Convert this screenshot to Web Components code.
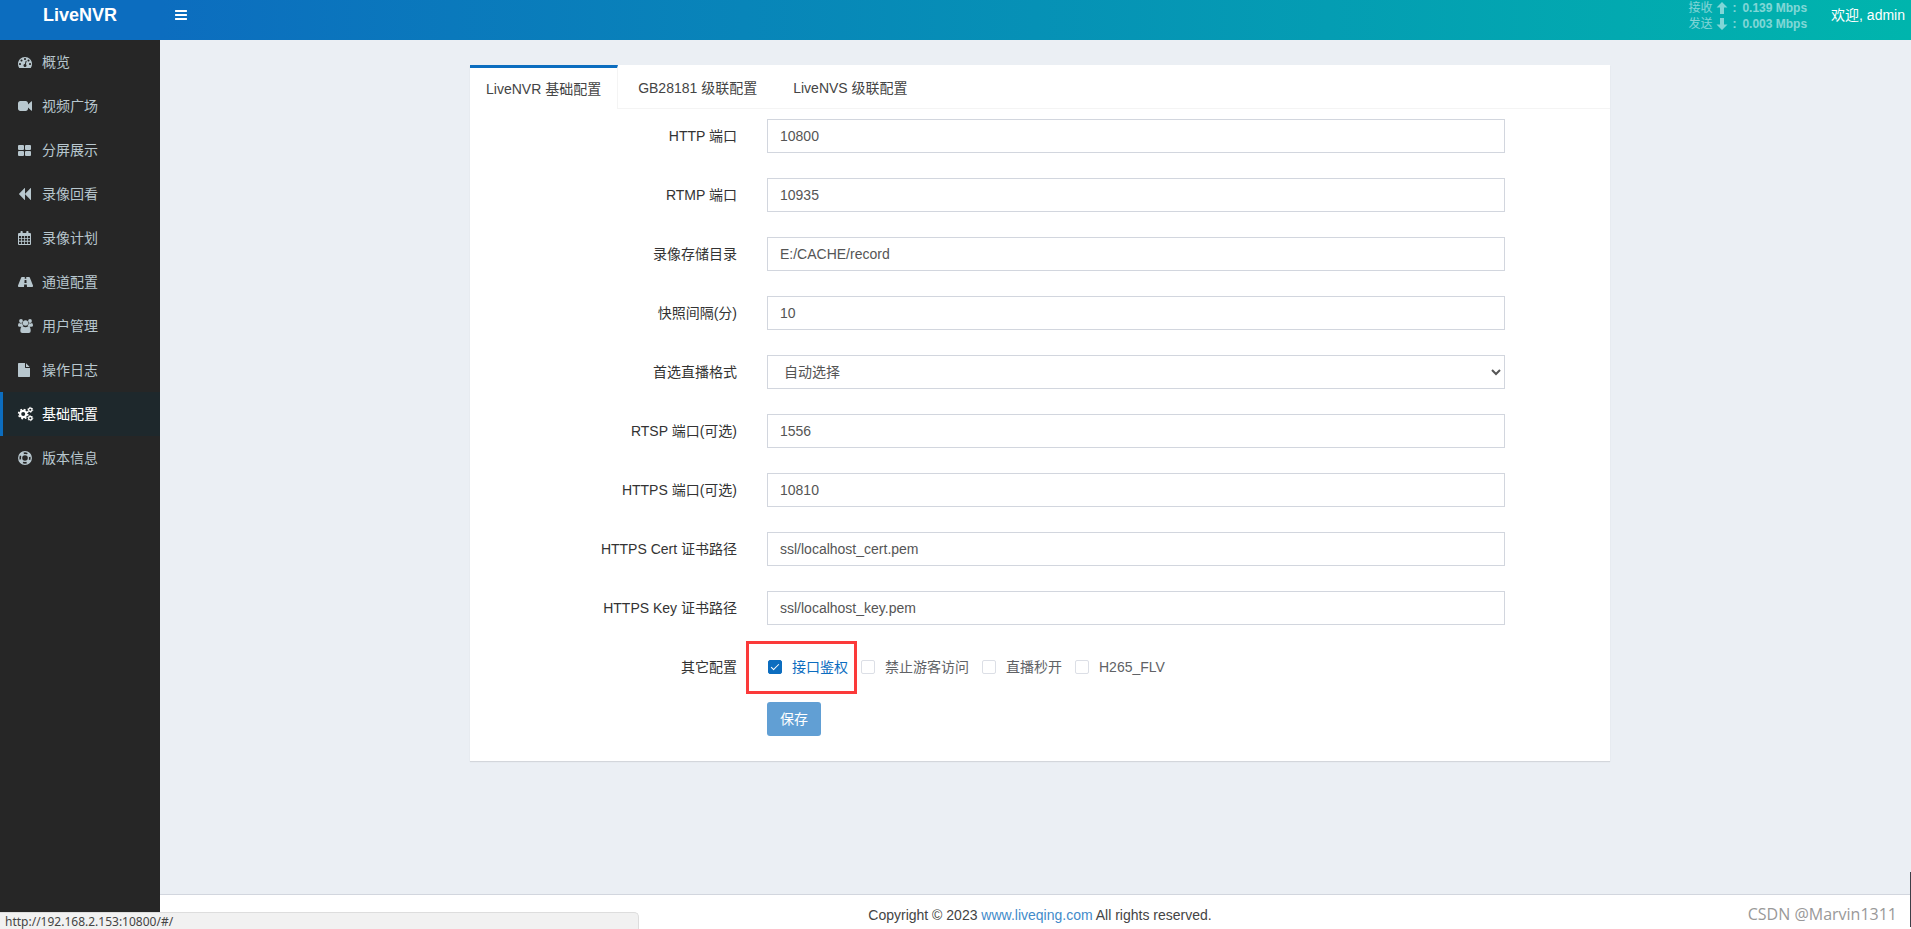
<!DOCTYPE html>
<html lang="zh-CN">
<head>
<meta charset="utf-8">
<title>LiveNVR</title>
<style>
html, body { margin: 0; height: 100%; }
body {
  font: 14px/20px "Liberation Sans", "Noto Sans CJK SC", sans-serif;
  color: #333;
  overflow: hidden;
  --primary: #0c6dbf;
  --line: #d2d6de;
}
</style>
</head>
<body>
<nvr-app></nvr-app>
<script>
const ICONS = {
  bars: ['0 0 1792 1792', '<path d="M1664 1344v128q0 26-19 45t-45 19h-1408q-26 0-45-19t-19-45v-128q0-26 19-45t45-19h1408q26 0 45 19t19 45zm0-512v128q0 26-19 45t-45 19h-1408q-26 0-45-19t-19-45v-128q0-26 19-45t45-19h1408q26 0 45 19t19 45zm0-512v128q0 26-19 45t-45 19h-1408q-26 0-45-19t-19-45v-128q0-26 19-45t45-19h1408q26 0 45 19t19 45z"/>'],
  dashboard: ['0 0 1792 1792', '<path d="M384 1152q0-53-37.5-90.5t-90.5-37.5-90.5 37.5-37.5 90.5 37.5 90.5 90.5 37.5 90.5-37.5 37.5-90.5zm192-448q0-53-37.5-90.5t-90.5-37.5-90.5 37.5-37.5 90.5 37.5 90.5 90.5 37.5 90.5-37.5 37.5-90.5zm428 481l101-382q6-26-7.5-48.5t-38.5-29.5-48 6.5-30 39.5l-101 382q-60 5-107 43.5t-63 98.5q-20 77 20 146t117 89 146-20 89-117q16-60-6-117t-72-91zm660-33q0-53-37.5-90.5t-90.5-37.5-90.5 37.5-37.5 90.5 37.5 90.5 90.5 37.5 90.5-37.5 37.5-90.5zm-640-640q0-53-37.5-90.5t-90.5-37.5-90.5 37.5-37.5 90.5 37.5 90.5 90.5 37.5 90.5-37.5 37.5-90.5zm448 192q0-53-37.5-90.5t-90.5-37.5-90.5 37.5-37.5 90.5 37.5 90.5 90.5 37.5 90.5-37.5 37.5-90.5zm320 448q0 261-141 483-19 29-54 29h-1402q-35 0-54-29-141-221-141-483 0-182 71-348t191-286 286-191 348-71 348 71 286 191 191 286 71 348z"/>'],
  video: ['0 0 1792 1792', '<path d="M1792 352v1088q0 42-39 59-13 5-25 5-27 0-45-19l-403-403v166q0 119-84.5 203.5t-203.5 84.5h-704q-119 0-203.5-84.5t-84.5-203.5v-704q0-119 84.5-203.5t203.5-84.5h704q119 0 203.5 84.5t84.5 203.5v165l403-402q18-19 45-19 12 0 25 5 39 17 39 59z"/>'],
  grid: ['64 0 1792 1792', '<rect x="64" y="256" width="768" height="640" rx="128"/><rect x="960" y="256" width="768" height="640" rx="128"/><rect x="64" y="1024" width="768" height="640" rx="128"/><rect x="960" y="1024" width="768" height="640" rx="128"/>'],
  backward: ['0 0 1792 1792', '<path d="M1619 141q19-19 32-13t13 32v1472q0 26-13 32t-32-13l-710-710q-9-9-13-19v710q0 26-13 32t-32-13l-710-710q-19-19-19-45t19-45l710-710q19-19 32-13t13 32v710q4-10 13-19z"/>'],
  calendar: ['0 0 14 14', '<path fill-rule="evenodd" d="M1 2h1.500V.8q0-.8.8-.8h.6q.8 0 .8.800V2h3.600V.8q0-.8.8-.8h.6q.8 0 .8.800V2H12q1 0 1 1v10q0 1-1 1H1q-1 0-1-1V3q0-1 1-1zM1 5v2h2.200V5zm3 0v2h2.200V5zm3 0v2h2V5zm2.800 0v2H12V5zM1 7.800v2h2.200v-2zm3 0v2h2.200v-2zm3 0v2h2v-2zm2.800 0v2H12v-2zM1 10.700V13h2.200v-2.300zm3 0V13h2.200v-2.300zm3 0V13h2v-2.300zm2.800 0V13H12v-2.300z"/>'],
  road: ['0 0 14 14', '<path fill-rule="evenodd" d="M3.800 2h3l-.1 1.800h1.600L8.200 2h3q.4 0 .6.500L15 10.600q.2 1.400-.6 1.400H9l-.2-2.500H6.200L6 12H.6q-.8 0-.6-1.400L3.200 2.500q.2-.5.6-.5zM6.600 5l-.2 3h2.200l-.2-3z"/>'],
  users: ['0 0 14 14', '<circle cx="3" cy="2" r="1.900"/><circle cx="12" cy="2" r="1.900"/><circle cx="7.500" cy="4" r="2.700"/><path d="M1.100 4Q3 5 4.300 4.100 4.400 6 5.500 6.900 4 7 3.400 7.800H1.600Q0 7.800 0 6.500 0 4.200 1.100 4zM13.900 4Q12 5 10.700 4.100 10.600 6 9.500 6.900 11 7 11.600 7.800h1.800q1.600 0 1.600-1.300Q15 4.200 13.900 4zM4.800 7.300q2.700 1.700 5.400 0 2.500.2 2.500 4.700 0 2-2 2H4.300q-2 0-2-2 0-4.500 2.500-4.700z"/>'],
  file: ['128 0 1792 1792', '<path d="M1152 512v-472q22 14 36 28l408 408q14 14 28 36h-472zm-128 32q0 40 28 68t68 28h544v1056q0 40-28 68t-68 28h-1344q-40 0-68-28t-28-68v-1600q0-40 28-68t68-28h800v544z"/>'],
  cogs: ['0 0 14 14', '<g fill="none" stroke="currentColor"><circle cx="5.200" cy="7" r="3.100" stroke-width="2.200"/><circle cx="5.200" cy="7" r="4.600" stroke-width="1.600" stroke-dasharray="1.810 1.803"/><circle cx="12.300" cy="2.800" r="1.700" stroke-width="1.300"/><circle cx="12.300" cy="2.800" r="2.500" stroke-width=".9" stroke-dasharray="1.310 1.308"/><circle cx="12.300" cy="11.200" r="1.700" stroke-width="1.300"/><circle cx="12.300" cy="11.200" r="2.500" stroke-width=".9" stroke-dasharray="1.310 1.308"/></g>'],
  ring: ['0 0 14 14', '<g fill="none" stroke="currentColor"><circle cx="7" cy="7" r="6.300" stroke-width="1.300"/><circle cx="7" cy="7" r="3.400" stroke-width="1.200"/><circle cx="7" cy="7" r="5" stroke-width="3" stroke-dasharray="3.930 3.924" stroke-dashoffset="-1.960"/></g>'],
  up: ['0 0 12 12', '<path d="M6 0l5.500 5.500H8V12H4V5.500H.5z"/>'],
  down: ['0 0 12 12', '<path d="M6 12l5.500-5.500H8V0H4v6.500H.5z"/>']
};

/* Base element: renders its template into an open shadow root. */
class Base extends HTMLElement {
  connectedCallback() {
    if (this.shadowRoot) return;
    const t = document.createElement('template');
    t.innerHTML = '<style>*{box-sizing:border-box}</style>' + this.render();
    this.attachShadow({ mode: 'open' }).append(t.content.cloneNode(true));
  }
  attr(name) { return this.getAttribute(name) || ''; }
}

customElements.define('nvr-icon', class extends Base {
  render() {
    const [box, body] = ICONS[this.attr('name')];
    return `<style>:host{display:inline-block;width:14px;height:14px;flex:none}svg{display:block;width:100%;height:100%;overflow:visible}</style>
      <svg viewBox="${box}" fill="currentColor" aria-hidden="true">${body}</svg>`;
  }
});

customElements.define('nvr-header', class extends Base {
  render() {
    return `<style>
      :host{display:flex;height:40px;color:#fff;background:linear-gradient(to right,var(--primary) 160px,#00b5ad)}
      .logo{width:160px;line-height:30px;text-align:center;font-size:18px;font-weight:bold;color:#fff;text-decoration:none}
      button{align-self:flex-start;height:30px;margin:0;padding:0 14px;border:0;background:none;color:inherit;display:flex;align-items:center}
      .rates{margin-left:auto;opacity:.5;font-size:12px;line-height:15px;font-weight:bold}
      .rates div{display:grid;grid-template-columns:24px 12px 6px auto;gap:4px;align-items:center;height:16px}
      .rates nvr-icon{width:12px;height:12px}
      .cjk{font-weight:normal}
      .user{line-height:30px;padding:0 6px 0 24px;color:#fff;text-decoration:none}
    </style>
    <a class="logo" href="#/">LiveNVR</a>
    <button type="button" aria-label="菜单"><nvr-icon name="bars"></nvr-icon></button>
    <div class="rates">
      <div><span class="cjk">接收</span><nvr-icon name="up"></nvr-icon><span>:</span><span>0.139 Mbps</span></div>
      <div><span class="cjk">发送</span><nvr-icon name="down"></nvr-icon><span>:</span><span>0.003 Mbps</span></div>
    </div>
    <a class="user" href="#/user">欢迎, admin</a>`;
  }
});

customElements.define('nvr-nav-item', class extends Base {
  render() {
    return `<style>
      :host{display:block}
      a{display:flex;align-items:center;gap:10px;height:44px;padding-left:15px;border-left:3px solid transparent;color:#b8c7ce;text-decoration:none}
      :host([active]) a{background:#1e282c;border-color:var(--primary);color:#fff}
    </style><a href="#/"><nvr-icon name="${this.attr('icon')}"></nvr-icon><slot></slot></a>`;
  }
});

customElements.define('nvr-tab', class extends Base {
  render() {
    return `<style>
      :host{display:block}
      button{font:inherit;color:#444;background:none;margin:0 5px 0 0;height:43px;padding:3px 15px 0;border:0;border-right:1px solid transparent;display:block}
      :host([active]) button{position:relative;height:44px;padding:0 16px;margin-bottom:-1px;background:#fff;border-top:3px solid var(--primary);border-right-color:#f4f4f4}
    </style><button type="button" role="tab"><slot></slot></button>`;
  }
});

customElements.define('nvr-field', class extends Base {
  render() {
    const control = this.hasAttribute('select')
      ? `<select id="c"><option>${this.attr('value')}</option></select>`
      : `<input id="c" type="text" value="${this.attr('value')}">`;
    return `<style>
      :host{display:grid;grid-template-columns:3fr 8fr 1fr}
      label{padding:7px 15px;text-align:right}
      .control{padding:0 15px}
      input,select{display:block;width:100%;height:34px;margin:0;padding:6px 12px;border:1px solid var(--line);border-radius:0;background:#fff;font:inherit;color:#555}
    </style><label for="c">${this.attr('label')}</label><div class="control">${control}</div>`;
  }
});

customElements.define('nvr-check', class extends Base {
  render() {
    return `<style>
      :host{display:block}
      label{display:flex;align-items:center;height:34px;color:#606266}
      :host([checked]) label{color:var(--primary)}
      input{appearance:none;display:grid;place-items:center;width:14px;height:14px;margin:0 10px 0 0;border:1px solid #dcdfe6;border-radius:2px;background:#fff}
      input:checked{background:var(--primary);border-color:var(--primary)}
      input:checked::after{content:"";width:3px;height:7px;margin-top:-2px;border:solid #fff;border-width:0 1px 1px 0;transform:rotate(45deg)}
    </style><label><input type="checkbox" ${this.hasAttribute('checked') ? 'checked' : ''}><slot></slot></label>`;
  }
});

customElements.define('nvr-settings', class extends Base {
  render() {
    return `<style>
      :host{display:block;width:100%;max-width:1140px;margin:0 auto;background:#fff;box-shadow:0 1px 1px rgba(0,0,0,.1)}
      .tabs{display:flex;border-bottom:1px solid #f4f4f4}
      form{display:flex;flex-direction:column;gap:25px;padding:10px 0 25px;margin:0 -6px}
      .row{display:grid;grid-template-columns:3fr 8fr 1fr}
      .label{padding:7px 15px;text-align:right}
      .checks{position:relative;display:flex;gap:13px;padding:0 16px}
      .mark{position:absolute;left:-6px;top:-9px;width:111px;height:53px;border:3px solid #fb3a3a;pointer-events:none}
      .save{grid-column:2;padding:0 15px;margin-top:-7px}
      .save button{display:block;height:34px;padding:0 13px;border:0;border-radius:3px;background:#619fd4;color:#fff;font:inherit}
    </style>
    <div class="tabs" role="tablist">
      <nvr-tab active>LiveNVR 基础配置</nvr-tab><nvr-tab>GB28181 级联配置</nvr-tab><nvr-tab>LiveNVS 级联配置</nvr-tab>
    </div>
    <form>
      <nvr-field label="HTTP 端口" value="10800"></nvr-field>
      <nvr-field label="RTMP 端口" value="10935"></nvr-field>
      <nvr-field label="录像存储目录" value="E:/CACHE/record"></nvr-field>
      <nvr-field label="快照间隔(分)" value="10"></nvr-field>
      <nvr-field label="首选直播格式" value="自动选择" select></nvr-field>
      <nvr-field label="RTSP 端口(可选)" value="1556"></nvr-field>
      <nvr-field label="HTTPS 端口(可选)" value="10810"></nvr-field>
      <nvr-field label="HTTPS Cert 证书路径" value="ssl/localhost_cert.pem"></nvr-field>
      <nvr-field label="HTTPS Key 证书路径" value="ssl/localhost_key.pem"></nvr-field>
      <div class="row" role="group" aria-labelledby="other">
        <span class="label" id="other">其它配置</span>
        <div class="checks">
          <nvr-check checked>接口鉴权</nvr-check><nvr-check>禁止游客访问</nvr-check><nvr-check>直播秒开</nvr-check><nvr-check>H265_FLV</nvr-check>
          <div class="mark"></div>
        </div>
      </div>
      <div class="row"><div class="save"><button type="button">保存</button></div></div>
    </form>`;
  }
});

customElements.define('nvr-footer', class extends Base {
  render() {
    return `<style>
      :host{display:block;padding:10px 0 4px 9px;border-top:1px solid var(--line);background:#fff;color:#444;text-align:center}
      a{color:#428bca;text-decoration:none}
    </style>Copyright © 2023 <a href="#/site">www.liveqing.com</a> All rights reserved.`;
  }
});

customElements.define('nvr-app', class extends Base {
  render() {
    return `<style>
      :host{display:grid;grid-template:auto 1fr auto / 160px 1fr;min-height:100vh;position:relative}
      nvr-header{grid-column:1/-1}
      nav{grid-row:2/4;background:#262626}
      main{background:#ebeff4;padding:25px 0 25px 9px}
      .status{position:absolute;left:0;bottom:0;width:639px;padding:1px 5px 0;border:solid #ddd;border-width:1px 1px 0 0;border-radius:0 5px 0 0;background:#f1f1f1;color:#444;font:12px/15px "Noto Sans",sans-serif}
      .credit{position:absolute;right:14px;bottom:5px;color:#999;font:16px/20px "Open Sans",sans-serif}
      .edge{position:absolute;right:0;bottom:2px;width:1px;height:55px;background:#3c3f48}
    </style>
    <nvr-header></nvr-header>
    <nav>
      <nvr-nav-item icon="dashboard">概览</nvr-nav-item>
      <nvr-nav-item icon="video">视频广场</nvr-nav-item>
      <nvr-nav-item icon="grid">分屏展示</nvr-nav-item>
      <nvr-nav-item icon="backward">录像回看</nvr-nav-item>
      <nvr-nav-item icon="calendar">录像计划</nvr-nav-item>
      <nvr-nav-item icon="road">通道配置</nvr-nav-item>
      <nvr-nav-item icon="users">用户管理</nvr-nav-item>
      <nvr-nav-item icon="file">操作日志</nvr-nav-item>
      <nvr-nav-item icon="cogs" active>基础配置</nvr-nav-item>
      <nvr-nav-item icon="ring">版本信息</nvr-nav-item>
    </nav>
    <main><nvr-settings></nvr-settings></main>
    <nvr-footer></nvr-footer>
    <div class="status">http://192.168.2.153:10800/#/</div>
    <div class="credit">CSDN @Marvin1311</div>
    <div class="edge"></div>`;
  }
});
</script>
</body>
</html>
